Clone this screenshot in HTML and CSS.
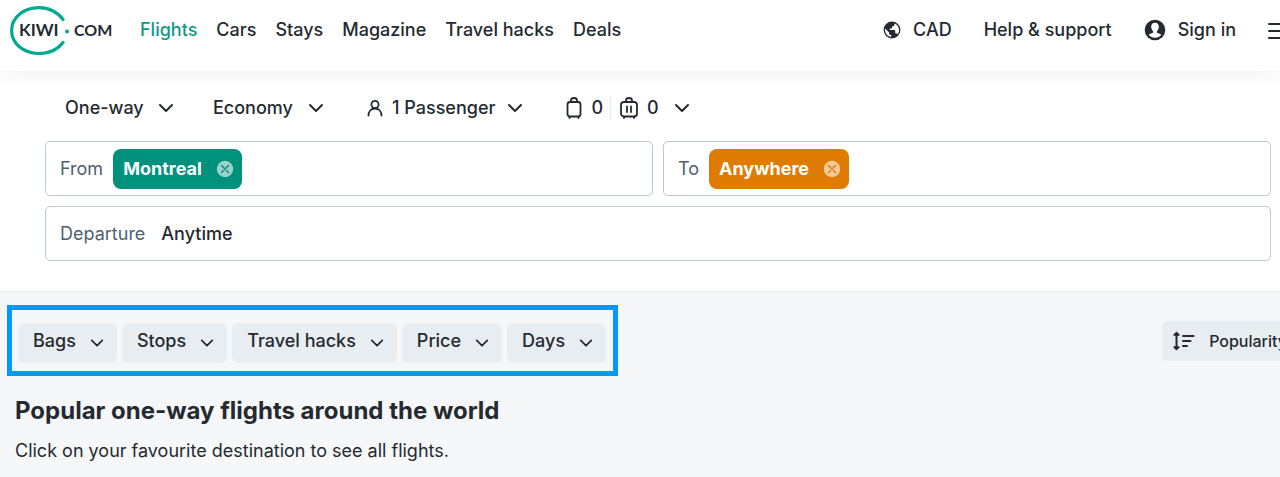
FILE: index.html
```
<!DOCTYPE html>
<html lang="en">
<head>
<meta charset="UTF-8" />
<meta name="viewport" content="width=device-width, initial-scale=1" />
<title>Kiwi.com - Flights</title>
<link rel="stylesheet" href="styles.css">
</head>
<body>

<!-- shared icons -->
<svg class="sprite" aria-hidden="true">
  <symbol id="chevron" viewBox="0 0 16 16">
    <path d="M2 5l6 6 6-6" fill="none" stroke="currentColor" stroke-width="2" stroke-linecap="round" stroke-linejoin="round" />
  </symbol>
  <symbol id="remove" viewBox="0 0 18 18">
    <circle cx="9" cy="9" r="8.2" fill="#fff" fill-opacity="0.6" />
    <path d="M5.5 5.5l7 7M12.5 5.5l-7 7" stroke="currentColor" stroke-width="1.4" stroke-linecap="round" />
  </symbol>
</svg>

<header class="navbar">
  <a href="#" class="logo" aria-label="Kiwi.com">
    <svg width="104" height="50" viewBox="0 0 104 50">
      <path d="M53 14.500C47 6.500 39 2.600 29 2.600C14 2.600 1.600 12 1.600 25.500C1.600 39 14 48.500 29 48.500C39 48.500 47 45.500 53 37.500" fill="none" stroke="#00a991" stroke-width="3.2" stroke-linecap="round" />
      <circle cx="57" cy="26.500" r="2" fill="#00a991" />
      <text x="9" y="31" class="logo-text logo-kiwi">KIWI</text>
      <text x="64" y="31" class="logo-text">COM</text>
    </svg>
  </a>
  <nav class="nav-links">
    <a href="#" class="active">Flights</a>
    <a href="#">Cars</a>
    <a href="#">Stays</a>
    <a href="#">Magazine</a>
    <a href="#">Travel hacks</a>
    <a href="#">Deals</a>
  </nav>
  <div class="nav-right">
    <button type="button">
      <svg width="18" height="18" viewBox="0 0 18 18">
        <circle cx="9" cy="9" r="8.400" fill="currentColor" />
        <path d="M11.300 2.400C14.500 3.400 16 6 16 9C16 10.700 15.500 12.200 14.700 13.300C14.400 12.600 13.800 12.200 12.900 12.200H12.200V9.900C12.200 9.400 11.900 9.100 11.400 9.100H6.800V7.500H8.300C8.800 7.500 9.100 7.200 9.100 6.700V5.200H10.600C11.100 5.200 11.300 4.700 11.300 4.300zM2.200 7.600L6.100 11.500V12.300C6.100 13.200 6.800 13.900 7.600 13.900H8.200V15.900C4.500 15.400 2 12.500 2 9C2 8.500 2.100 8 2.200 7.600z" fill="#fff" />
      </svg>
      CAD
    </button>
    <a href="#">Help &amp; support</a>
    <a href="#" class="sign-in">
      <svg width="22" height="22" viewBox="0 0 22 22">
        <circle cx="11" cy="11" r="10.300" fill="currentColor" />
        <path d="M11 3.800C8.700 3.800 7.200 5.400 7.200 7.700C7.200 9.600 8 11 9 12V13.700C7.200 14.500 5.500 14.800 4.700 15.800C6 17.600 8.300 18.700 11 18.700C13.700 18.700 16 17.600 17.300 15.800C16.500 14.800 14.800 14.500 13 13.700V12C14 11 14.800 9.600 14.800 7.700C14.800 5.400 13.300 3.800 11 3.800z" fill="#fff" />
      </svg>
      Sign in
    </a>
    <button type="button" class="menu-btn" aria-label="Open menu">
      <svg width="20" height="18" viewBox="0 0 20 18">
        <path d="M1 3h18M1 10h18M1 17h18" stroke="currentColor" stroke-width="2" stroke-linecap="round" />
      </svg>
    </button>
  </div>
</header>

<form class="search">
  <div class="options">
    <label class="picker trip-type">
      <select aria-label="Trip type">
        <option>One-way</option>
        <option>Return</option>
        <option>Nomad</option>
      </select>
      <svg class="chevron"><use href="#chevron" /></svg>
    </label>
    <label class="picker cabin">
      <select aria-label="Cabin class">
        <option>Economy</option>
        <option>Business</option>
      </select>
      <svg class="chevron"><use href="#chevron" /></svg>
    </label>
    <button type="button" class="passengers">
      <svg width="18" height="18" viewBox="0 0 18 18">
        <circle cx="9" cy="5.500" r="3.600" fill="none" stroke="currentColor" stroke-width="1.800" />
        <path d="M2.500 16.500C2.500 12.500 5 9.500 9 9.500S15.500 12.500 15.500 16.500" fill="none" stroke="currentColor" stroke-width="1.800" stroke-linecap="round" />
      </svg>
      <span>1 Passenger</span>
      <svg class="chevron"><use href="#chevron" /></svg>
    </button>
    <button type="button" class="luggage" aria-label="Bags: 0 cabin, 0 checked">
      <svg width="16" height="22" viewBox="0 0 16 22">
        <rect x="1.500" y="5" width="13" height="14.500" rx="2.500" fill="none" stroke="currentColor" stroke-width="1.800" />
        <path d="M5 5V3.500C5 1.500 6 1 8 1S11 1.500 11 3.500V5M3.500 20v1M12.500 20v1" fill="none" stroke="currentColor" stroke-width="1.800" stroke-linecap="round" />
      </svg>
      <span class="cabin-count">0</span>
      <svg width="18" height="22" viewBox="0 0 18 22">
        <rect x="1" y="5" width="16" height="14.500" rx="3" fill="none" stroke="currentColor" stroke-width="1.800" />
        <path d="M6 5V3.500C6 1.500 7 1 9 1S12 1.500 12 3.500V5M7 9.500v5.500M11 9.500v5.500M4 20v1M14 20v1" fill="none" stroke="currentColor" stroke-width="1.800" stroke-linecap="round" />
      </svg>
      <span>0</span>
      <svg class="chevron"><use href="#chevron" /></svg>
    </button>
  </div>

  <div class="places">
    <div class="field">
      <label for="from">From</label>
      <span class="tag tag-from">Montreal
        <button type="button" aria-label="Remove Montreal"><svg width="18" height="18"><use href="#remove" /></svg></button>
      </span>
      <input type="text" id="from">
    </div>
    <div class="field">
      <label for="to">To</label>
      <span class="tag tag-to">Anywhere
        <button type="button" aria-label="Remove Anywhere"><svg width="18" height="18"><use href="#remove" /></svg></button>
      </span>
      <input type="text" id="to">
    </div>
  </div>
  <div class="field">
    <label for="departure">Departure</label>
    <input type="text" id="departure" class="date" value="Anytime">
  </div>
</form>

<main class="results">
  <div class="toolbar">
    <div class="filters">
      <button type="button">Bags <svg class="chevron"><use href="#chevron" /></svg></button>
      <button type="button">Stops <svg class="chevron"><use href="#chevron" /></svg></button>
      <button type="button">Travel hacks <svg class="chevron"><use href="#chevron" /></svg></button>
      <button type="button">Price <svg class="chevron"><use href="#chevron" /></svg></button>
      <button type="button">Days <svg class="chevron"><use href="#chevron" /></svg></button>
    </div>
    <button type="button" class="sort">
      <svg width="24" height="20" viewBox="0 0 24 20">
        <path d="M4.500 3v14M11 5h10.500M11 10h7.500M11 15h4" stroke="currentColor" stroke-width="2" stroke-linecap="round" />
        <path d="M4.500 1.500L7 4H2zM4.500 18.500L7 16H2z" fill="currentColor" stroke="currentColor" stroke-width="1.500" stroke-linejoin="round" />
      </svg>
      Popularity
    </button>
  </div>
  <h1>Popular one-way flights around the world</h1>
  <p>Click on your favourite destination to see all flights.</p>
</main>

</body>
</html>
```
FILE: styles.css
```
* {
  box-sizing: border-box;
}

body {
  margin: 0;
  min-height: 100vh;
  display: flex;
  flex-direction: column;
  overflow: hidden;
  background: #fff;
  color: #252a31;
  font-family: Inter, 'Liberation Sans', sans-serif;
  font-size: 18px;
  font-weight: 500;
  line-height: 24px;
}

a {
  color: inherit;
  text-decoration: none;
}

button,
select,
input {
  margin: 0;
  padding: 0;
  border: none;
  background: none;
  color: inherit;
  font: inherit;
}

button,
select {
  cursor: pointer;
}

svg {
  display: block;
  flex: none;
}

.sprite {
  position: absolute;
  width: 0;
  height: 0;
}

.chevron {
  width: 16px;
  height: 16px;
}

/* Top bar */
.navbar {
  display: flex;
  align-items: center;
  height: 71px;
  padding: 0 0 11px 10px;
  box-shadow: 0 2px 20px rgba(37, 42, 49, 0.07);
}

.logo-text {
  font-family: Lato, sans-serif;
  font-size: 16px;
  font-weight: 700;
  fill: #252a31;
}

.logo-kiwi {
  font-size: 17px;
}

.nav-links {
  display: flex;
  gap: 19px;
  margin-left: 26px;
}

.nav-links .active {
  color: #0f9a83;
}

.nav-right {
  display: flex;
  align-items: center;
  gap: 32px;
  margin-left: auto;
  margin-right: -8px;
}

.nav-right button,
.nav-right a {
  display: flex;
  align-items: center;
  gap: 12px;
}

/* Search form */
.search {
  display: flex;
  flex-direction: column;
  gap: 10px;
  padding: 19px 9px 30px 45px;
}

.options {
  display: flex;
  align-items: center;
  height: 41px;
  padding: 0 20px 6px;
}

.picker {
  display: flex;
  align-items: center;
}

.picker select {
  width: 100%;
  padding-right: 24px;
  appearance: none;
}

.picker .chevron {
  margin-left: -16px;
  pointer-events: none;
}

.trip-type {
  width: 109px;
  margin-right: 39px;
}

.cabin {
  width: 111px;
  margin-right: 42px;
}

.passengers,
.luggage {
  display: flex;
  align-items: center;
  gap: 8px;
}

.passengers {
  margin-right: 43px;
}

.passengers .chevron {
  margin-left: 4px;
}

.luggage {
  gap: 9px;
}

.luggage .chevron {
  margin-left: 6px;
}

.cabin-count {
  padding-right: 7px;
  border-right: 1px solid #e8edf1;
}

.places {
  display: grid;
  grid-template-columns: 1fr 1fr;
  gap: 10px;
}

.field {
  display: flex;
  align-items: center;
  gap: 10px;
  height: 55px;
  padding: 0 14px;
  border: 1px solid #bac7d5;
  border-radius: 5px;
}

.field label {
  color: #4f5e71;
  font-weight: 400;
}

.field input {
  flex: 1;
  min-width: 0;
  outline: none;
}

.field .date {
  padding-left: 6px;
}

.tag {
  display: flex;
  align-items: center;
  gap: 14px;
  height: 40px;
  padding: 0 8px 0 10px;
  border-radius: 8px;
  color: #fff;
  font-weight: 700;
}

.tag-from {
  background: #00917c;
}

.tag-to {
  background: #df7b00;
}

.tag-from button {
  color: #00917c;
}

.tag-to button {
  color: #df7b00;
}

/* Results */
.results {
  flex: 1;
  padding: 13px 0 0 7px;
  border-top: 1px solid #e8edf1;
  background: #f5f7f9;
}

.toolbar {
  display: flex;
  align-items: center;
  justify-content: space-between;
}

.filters {
  display: flex;
  gap: 5px;
  padding: 13px 7px 8px 6px;
  border: 5px solid #0099ff;
}

.filters button,
.sort {
  display: flex;
  align-items: center;
  height: 40px;
  border-radius: 6px;
  background: #e8edf1;
}

.filters button {
  gap: 14px;
  padding: 0 13px 4px 15px;
}

.filters .chevron {
  width: 14px;
  height: 14px;
  margin-top: 4px;
}

.sort {
  gap: 13px;
  margin-right: -19px;
  padding: 0 12px 0 10px;
  font-size: 16px;
}

h1 {
  margin: 19px 8px 0;
  font-size: 24px;
  font-weight: 700;
  line-height: 32px;
}

p {
  margin: 12px 8px 0;
  font-weight: 400;
}
```
